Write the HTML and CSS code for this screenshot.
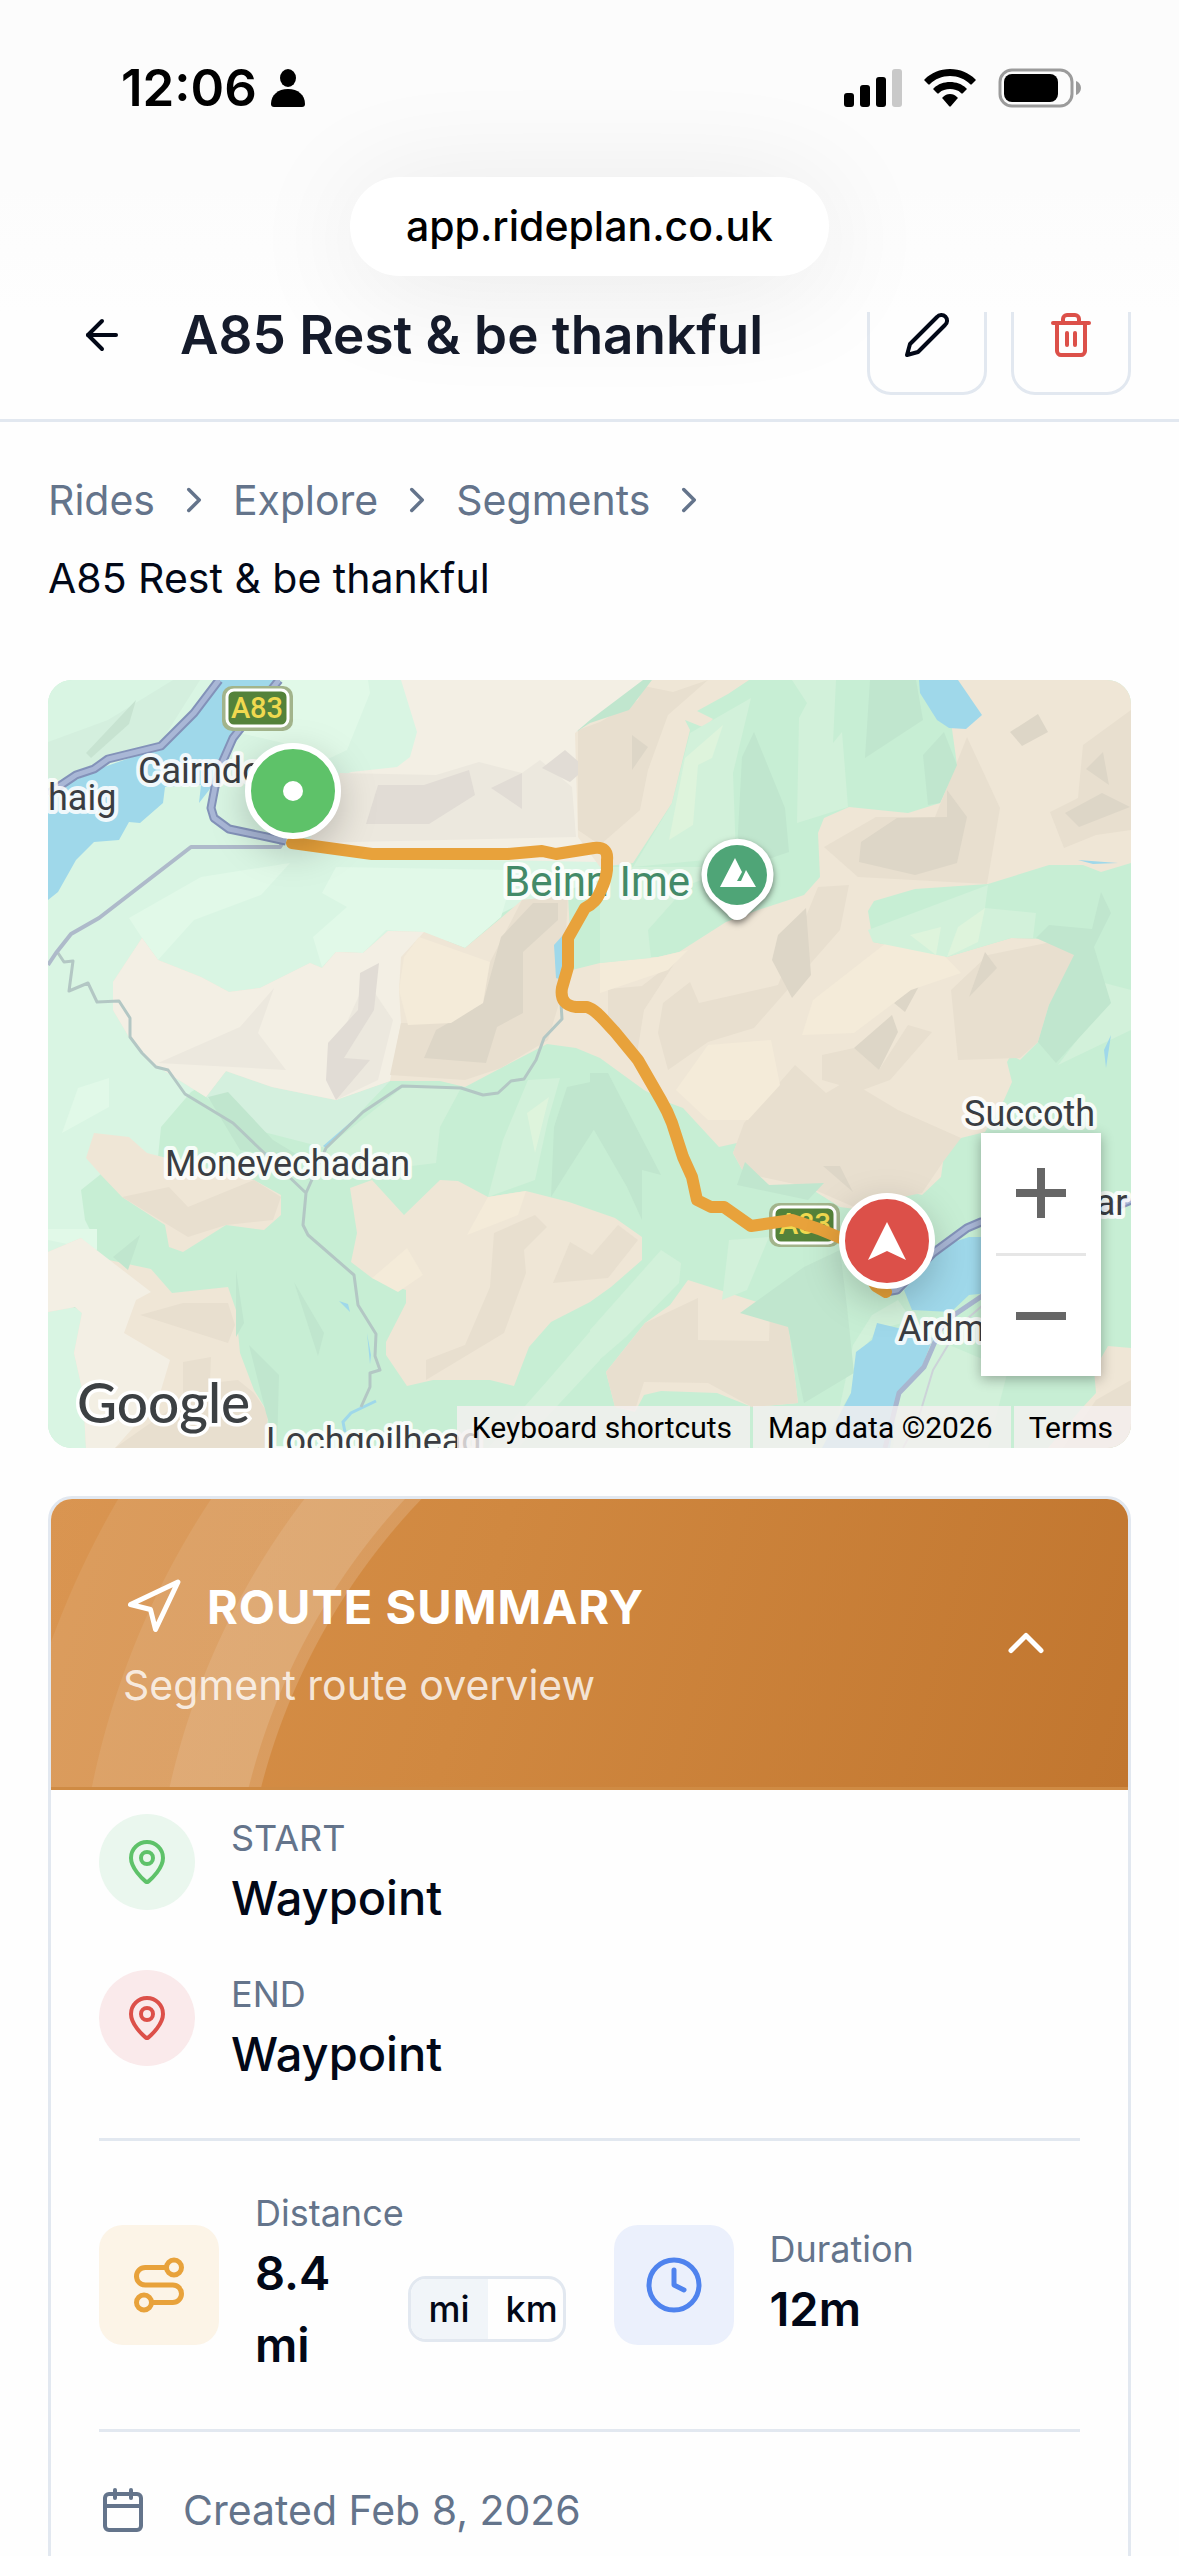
FILE: index.html
```
<!DOCTYPE html>
<html lang="en">
<head>
  <meta charset="UTF-8">
  <meta name="viewport" content="width=device-width, initial-scale=1">
  <title>A85 Rest &amp; be thankful | RidePlan</title>
  <link rel="stylesheet" href="styles.css">
</head>
<body>

<div class="chrome">
  <div class="status">
    <div class="status__time">
      <span>12:06</span>
      <svg width="34" height="38" viewBox="0 0 34 38"><ellipse cx="17" cy="9" rx="8" ry="9"/><path d="M0 35C0 26 7 20 17 20s17 6 17 15c0 2-1 3-3 3H3c-2 0-3-1-3-3z"/></svg>
    </div>
    <div class="status__icons">
      <svg width="58" height="38" viewBox="0 0 58 38"><rect y="24" width="10" height="14" rx="3"/><rect x="16" y="16" width="10" height="22" rx="3"/><rect x="32" y="8" width="10" height="30" rx="3"/><rect x="48" width="10" height="38" rx="3" fill="#c9c9c9"/></svg>
      <svg width="52" height="38" viewBox="0 0 52 38"><path d="M26 0C16 0 7 4 1 10c-1 1-1 1 0 2l3 3c1 1 1 1 2 0 5-5 12-8 20-8s15 3 20 8c1 1 1 1 2 0l3-3c1-1 1-1 0-2C45 4 36 0 26 0z"/><path d="M26 13c-6 0-12 2-16 6-1 1-1 1 0 2l3 3c1 1 1 1 2 0 3-3 7-4 11-4s8 1 11 4c1 1 1 1 2 0l3-3c1-1 1-1 0-2-4-4-10-6-16-6z"/><path d="M26 25c-3 0-5 1-7 3-1 1-1 1 0 2l6 7c1 1 1 1 2 0l6-7c1-1 1-1 0-2-2-2-4-3-7-3z"/></svg>
      <svg width="84" height="40" viewBox="0 0 84 40"><rect x="2" y="2" width="72" height="36" rx="12" fill="none" stroke="#9b9b9b" stroke-width="3"/><rect x="6" y="6" width="54" height="28" rx="8"/><path d="M78 13c3 1 5 4 5 7s-2 6-5 7z" fill="#9b9b9b"/></svg>
    </div>
  </div>
  <a class="url" href="#">app.rideplan.co.uk</a>
</div>

<header class="topbar">
  <div class="topbar__row">
    <button class="back" aria-label="Back">
      <svg class="icon" width="48" height="48" viewBox="0 0 24 24"><path d="m12 19-7-7 7-7"/><path d="M19 12H5"/></svg>
    </button>
    <h1>A85 Rest &amp; be thankful</h1>
    <button class="tool" aria-label="Edit">
      <svg class="icon" width="48" height="48" viewBox="0 0 24 24"><path d="M17 3a2.85 2.83 0 1 1 4 4L7.5 20.5 2 22l1.5-5.5Z"/></svg>
    </button>
    <button class="tool tool--danger" aria-label="Delete">
      <svg class="icon" width="48" height="48" viewBox="0 0 24 24"><path d="M3 6h18"/><path d="M19 6v14c0 1-1 2-2 2H7c-1 0-2-1-2-2V6"/><path d="M8 6V4c0-1 1-2 2-2h4c1 0 2 1 2 2v2"/><path d="M10 11v6"/><path d="M14 11v6"/></svg>
    </button>
  </div>
</header>

<main>
  <nav class="crumbs">
    <a href="#">Rides</a>
    <svg class="icon" width="42" height="42" viewBox="0 0 24 24"><path d="m9 18 6-6-6-6"/></svg>
    <a href="#">Explore</a>
    <svg class="icon" width="42" height="42" viewBox="0 0 24 24"><path d="m9 18 6-6-6-6"/></svg>
    <a href="#">Segments</a>
    <svg class="icon" width="42" height="42" viewBox="0 0 24 24"><path d="m9 18 6-6-6-6"/></svg>
    <span class="crumbs__current">A85 Rest &amp; be thankful</span>
  </nav>

  <section class="map">
    <svg class="map__canvas" viewBox="0 0 1083 768" preserveAspectRatio="xMidYMid slice">
      <rect width="1083" height="768" fill="#c7eed4"/>

      <!-- lowland -->
      <g fill="#d9f5e3">
        <path d="M0 0H600L552 200 470 225 380 270 143 412 113 447 110 477 53 494 33 510 37 540 47 560 49 580 0 575z"/>
        <path d="M0 620 34 630 40 768H0z"/>
      </g>
      <path d="M178 391 288 420 342 401 278 468 192 446 158 417z" fill="#d4f0de"/>
      <g fill="#e1f9e8">
        <path d="M288 187 467 190 453 237 417 268 378 253 338 250 315 273 288 272 274 287 265 257 299 227 274 213z"/>
        <path d="M81 238 153 197 242 183 213 215 146 240 110 280 94 258z"/>
        <path d="M235 0H320L322 13 299 70 263 87 235 63 192 53z"/>
        <path d="M30 408 61 398 61 427 14 453z"/>
        <path d="M0 549H49V570L0 560z"/>
      </g>
      <path d="M0 62 60 40 125 0H152L113 62 10 100 0 110z" fill="#d4efde"/>
      <path d="M38 73 88 20 81 44 43 78z" fill="#c7e3d1"/>

      <!-- upland -->
      <path d="M353 0 369 52 362 77 349 87 303 92 275 105 262 160 330 178 552 182 604 0z" fill="#f3efe4"/>
      <path d="M604 0H701L680 14 649 31 665 39 657 48 637 40 642 50 624 123 585 183 552 187 530 157 527 53z" fill="#efe6d6"/>
      <path d="M910 0H1083V183L1053 192 1035 185 1001 185 940 204 867 209 826 221 820 231 825 262 899 277 963 258 1003 259 1026 275 1022 293 1001 325 990 362 972 380 963 375 959 382 964 402 956 420 937 452 913 458 899 468 883 478 895 482 893 497 874 515 855 510 850 525 814 530 792 527 760 507 721 505 696 493 685 473 689 463 671 467 635 428 619 422 596 410 552 378 528 368 499 364 453 388 417 407 392 401 342 401 288 420 224 407 178 391 158 417 99 380 81 357 65 330 65 302 94 258 110 280 153 297 181 312 212 308 262 283 274 288 288 272 315 273 340 251 376 252 417 268 453 238 474 220 520 215 524 290 552 283 610 277 631 272 678 242 713 229 756 215 772 197 770 153 776 138 801 127 860 133 892 123 909 85 904 49z" fill="#efe6d6"/>
      <path d="M376 252 353 277 351 310 353 343 344 390 342 401 288 420 224 407 178 391 158 417 99 380 81 357 65 330 65 302 94 258 110 280 153 297 181 312 212 308 262 283 274 288 288 272 315 273 340 251z" fill="#f3efe4"/>
      <path d="M46 453 81 457 99 473 206 500 233 515 233 535 216 550 178 545 135 572 121 567 117 545 74 517 53 495 38 478z" fill="#efe6d6"/>
      <path d="M0 572 33 558 47 577 103 589 124 613 180 607 188 630 192 673 206 710 220 733 218 768H38L35 713 26 673 34 633 27 627 0 632z" fill="#efe6d6"/>
      <path d="M0 572 33 558 103 612 88 620 76 653 122 680 110 720 67 768H38L35 713 26 673 34 633 27 627 0 632z" fill="#f3efe4"/>
      <path d="M302 508 324 500 356 535 392 500 410 501 440 517 478 511 521 522 567 538 594 557 594 580 563 607 542 622 503 642 481 667 466 706 442 700 385 700 359 706 338 675 338 662 358 623 358 610 324 598 303 582 309 553z" fill="#efe6d6"/>
      <path d="M640 600 728 628 740 643 750 723 704 727 669 713 613 711 596 715 587 732 567 727 558 692 597 643 622 625z" fill="#efe6d6"/>
      <path d="M1060 666 1083 668V768H1000L1035 727 1048 713 1046 690z" fill="#efe6d6"/>

      <!-- hill shading -->
      <g fill="#ece8de">
        <path d="M292 93 388 95 431 82 474 93 492 80 524 107 528 157 260 163z"/>
        <path d="M226 308 210 353 238 390 110 383 192 347z"/>
        <path d="M300 340 318 300 345 340 330 400 288 420 278 400z"/>
      </g>
      <g fill="#e1dcd5">
        <path d="M330 105 376 105 421 90 427 115 381 144 318 144z"/>
        <path d="M443 108 474 93 474 129z"/>
        <path d="M494 88 517 70 538 88 522 102z"/>
        <path d="M312 293 331 283 326 330 296 378 322 380 288 420 278 400 280 363 310 330z"/>
      </g>
      <g fill="#e8dfcf">
        <path d="M530 50 552 42 590 20 596 6 625 12 660 0 620 35 600 90 592 130 552 165 530 150z"/>
        <path d="M474 220 520 215 515 310 500 360 453 388 417 400 342 395 353 343 403 343 442 282z"/>
        <path d="M919 57 952 128 939 204 810 197 776 167 828 137 887 137z"/>
        <path d="M642 302 651 323 730 305 770 207 801 205 792 250 706 348 660 362 620 390 610 353 615 323z"/>
        <path d="M560 309 594 306 630 278 596 330 588 380 560 345z"/>
        <path d="M1083 30 1035 65 1030 118 1002 132 1016 168 1048 155 1083 150z"/>
        <path d="M903 310 940 275 1003 262 1026 275 1022 293 1001 325 990 362 972 378 910 380z"/>
        <path d="M774 375 806 368 831 390 860 345 884 352 842 400 812 411 774 400z"/>
        <path d="M696 443 747 385 778 413 800 400 850 430 913 458 895 482 874 513 806 527 760 507 696 493 685 473z"/>
        <path d="M121 507 140 527 206 500 233 517 225 540 178 545 140 557 74 517z"/>
        <path d="M487 535 499 547 476 570 478 593 456 653 378 700 378 680 417 665 442 607 446 553z"/>
        <path d="M522 562 544 575 570 545 590 560 560 598 505 603z"/>
        <path d="M92 635 135 623 180 623 187 645 180 663z"/>
        <path d="M135 682 163 677 162 703 190 700 206 713 220 733 217 768H67L135 720z"/>
        <path d="M650 618 650 660 721 661 722 630 740 643 750 723 704 727 660 703 596 702 587 730 567 727 558 692 597 643z"/>
        <path d="M1048 720 1083 700V768H1015z"/>
      </g>
      <g fill="#ddd6c7">
        <path d="M485 223 510 223 510 240 475 272 475 333 449 347 438 383 376 378 388 350 435 323 453 257z"/>
        <path d="M849 138 899 137 899 110 919 137 909 183 867 195 811 182 813 162z"/>
        <path d="M758 228 763 295 744 318 724 280 730 255z"/>
        <path d="M1017 133 1054 113 1082 127 1031 147z"/>
        <path d="M962 52 990 34 1000 52 974 66z"/>
        <path d="M1038 89 1055 72 1061 105z"/>
        <path d="M937 272 949 288 921 317z"/>
        <path d="M846 323 876 297 857 332z"/>
        <path d="M806 368 844 335 850 352 831 390z"/>
        <path d="M584 55 600 67 584 90z"/>
        <path d="M775 486 792 486 805 512z"/>
      </g>
      <g fill="#f4ebd9">
        <path d="M371 257 442 282 435 323 403 343 360 345 351 310 356 277z"/>
        <path d="M894 273 913 293 863 310 806 353 754 355 765 320 838 263z"/>
        <path d="M552 283 610 277 640 270 620 290 552 313z"/>
        <path d="M660 365 723 360 732 405 700 440 660 440 628 410z"/>
        <path d="M440 517 478 511 470 535 419 555z"/>
        <path d="M359 568 375 595 350 612 324 598z"/>
      </g>
      <g fill="#d2f1da">
        <path d="M642 53 703 18 685 93 688 177 585 187 624 123z"/>
        <path d="M552 187 688 187 640 205 600 250 603 278 552 283z"/>
        <path d="M744 0H788L785 63 794 52 800 127 749 143 751 38 759 23z"/>
        <path d="M825 262 820 250 940 205 937 228 988 233 985 258 963 258 899 277z"/>
        <path d="M1045 300 1048 335 1010 385 1083 350V310z"/>
        <path d="M354 408 413 408 392 447 388 483 290 495 278 468z"/>
        <path d="M480 400 512 398 500 440 487 500 440 517 455 460z"/>
        <path d="M681 560 721 557 699 610 674 620z"/>
        <path d="M542 650 613 570 633 583 631 603 578 657 542 688z"/>
        <path d="M885 658 960 690 940 768H845L851 713z"/>
        <path d="M824 635 850 620 864 640 829 650 808 680 803 713 790 735 805 665z"/>
        <path d="M470 768 552 680 552 640 500 700 440 768z"/>
      </g>
      <g fill="#def4dc">
        <path d="M637 78 675 45 664 78 650 85 645 145 621 160z"/>
        <path d="M862 255 893 247 888 275z"/>
        <path d="M910 247 937 228 930 262 899 277z"/>
        <path d="M479 433 501 417 487 473z"/>
      </g>
      <g fill="#c0e6ce">
        <path d="M706 52 737 128 741 172 688 190 694 77z"/>
        <path d="M822 0H868L875 40 817 78z"/>
        <path d="M875 75 896 52 909 85 892 123 880 125z"/>
        <path d="M528 52 542 43 581 30 604 0H595L542 40z"/>
        <path d="M988 258 1001 245 1044 249 1053 212 1063 233 1046 267 1063 323 1008 383 990 362 1001 325 1026 275z"/>
        <path d="M519 407 552 400 552 440 520 490 503 517 506 447z"/>
        <path d="M542 393 560 393 613 495 594 490 594 540 579 507 542 443z"/>
        <path d="M792 570 799 627 806 693 756 723 740 647 692 633 756 587z"/>
        <path d="M697 482 721 505 776 503 760 520 689 505z"/>
        <path d="M188 590 196 643 188 657z"/>
        <path d="M246 602 276 653 270 676z"/>
        <path d="M201 665 231 695 229 768 218 733z"/>
        <path d="M65 577 92 555 80 590z"/>
        <path d="M160 417 180 412 225 460 258 480 192 470z"/>
      </g>

      <!-- water -->
      <g fill="#9fd8ea">
        <path d="M172 0H228L196 50 174 83 165 105 151 123 153 105 117 107 115 123 92 143 81 142 71 160 46 162 28 180 10 212 0 220V117L13 107 56 87 113 67 146 33z"/>
        <path d="M871 0H910L934 35 918 49 901 48 889 40 872 13z"/>
        <path d="M933 557 921 557 903 563 885 577 856 610 864 630 903 632 921 615 950 612V557z"/>
        <path d="M829 643 850 648 885 658 874 687 851 713 842 768H774L803 713 808 672 824 660z"/>
        <path d="M506 265 515 255 514 300 508 298z"/>
        <path d="M1030 180 1070 183 1045 184z"/>
        <path d="M1056 370 1063 355 1058 388z"/>
        <path d="M275 466 312 434 278 468z"/>
        <path d="M291 621 300 624 302 632z"/>
        <path d="M319 653 323 675 322 684z"/>
      </g>
      <path d="M328 721 303 733 295 742 297 752" fill="none" stroke="#9fd8ea" stroke-width="3"/>

      <!-- roads -->
      <g fill="none" stroke-linejoin="round">
        <path d="M10 273 16 282 25 281 21 311 40 303 49 322 71 321 82 338 82 357 94 373 108 387 120 390 137 414 185 443 212 469 258 513 255 545 260 555 306 595 310 625 328 654 327 676 332 690 322 693 322 707 313 727M258 513 278 468 315 432 354 406 413 408 435 415 450 413 463 401 476 399 488 380 496 358 514 339 513 323" stroke="#b3c7c4" stroke-width="3"/>
        <path d="M235 162 232 167 143 167 51 238 23 254 8 273 0 285" stroke="#aebaca" stroke-width="4"/>
        <path d="M940 612 906 635 892 650 876 687 851 713 837 768" stroke="#a8b6cf" stroke-width="5"/>
        <path d="M935 625 912 645 885 690 870 740 855 768" stroke="#ccd3d8" stroke-width="2"/>
        <g stroke="#8392b9" stroke-width="9">
          <path d="M0 114 13 105 28 95 46 89 60 79 113 66 146 33 171 0M231 0 185 58 174 83 167 107 163 128 166 138 181 149 238 161"/>
          <path d="M1083 520 1071 525 933 542 919 548 885 573 849 610 838 612"/>
        </g>
        <g stroke="#a9b7d6" stroke-width="5">
          <path d="M0 114 13 105 28 95 46 89 60 79 113 66 146 33 171 0M231 0 185 58 174 83 167 107 163 128 166 138 181 149 238 161"/>
          <path d="M1083 520 1071 525 933 542 919 548 885 573 849 610 838 612"/>
        </g>
      </g>

      <!-- road shields -->
      <g class="shield">
        <rect x="174" y="6" width="71" height="45" rx="10" fill="#a2b48b"/>
        <rect x="179" y="10" width="61" height="36" rx="7" fill="#54823a" stroke="#fff" stroke-width="3"/>
        <text x="209" y="38">A83</text>
        <rect x="721" y="523" width="71" height="44" rx="10" fill="#a2b48b"/>
        <rect x="726" y="527" width="61" height="36" rx="7" fill="#54823a" stroke="#fff" stroke-width="3"/>
        <text x="757" y="554">A83</text>
      </g>

      <!-- places -->
      <g class="place">
        <text x="90" y="103">Cairndow</text>
        <text x="0" y="130">haig</text>
        <text x="117" y="496">Monevechadan</text>
        <text x="916" y="446">Succoth</text>
        <text x="850" y="661">Ardmay</text>
        <text x="1036" y="535">tar</text>
        <text x="218" y="773">Lochgoilhead</text>
        <text class="place--peak" x="456" y="216">Beinn Ime</text>
      </g>
      <g class="pin">
        <path d="M689 240C685 240 682 238 679 234L662 218A36 36 0 1 1 717 218L700 234C697 238 693 240 689 240z" fill="#fff"/>
        <circle cx="689" cy="195" r="30" fill="#4fa577"/>
        <path d="M687 178 694 192 689 201H693L698 190 708 207H672z" fill="#fff"/>
      </g>

      <path d="M244 163 324 174H460L494 171 508 174 546 168C556 167 560 171 559 180V190Q558 200 553 210C549 220 545 224 537 228L520 258V287L514 308C512 320 518 326 528 327H539C549 330 557 342 567 352L590 380 613 420Q620 432 624 443L635 477 644 497 649 520 663 527H676L703 546 744 540 771 549 800 561 828 606 838 612" fill="none" stroke="#e8a23b" stroke-width="12" stroke-linejoin="round" stroke-linecap="round"/>

      <g class="marker">
        <circle cx="245" cy="111" r="45" fill="#5ec269"/>
        <circle cx="245" cy="111" r="10" fill="#fff" stroke="none"/>
      </g>
      <g class="marker">
        <circle cx="839" cy="561" r="45" fill="#dc5049"/>
        <path d="M839 542 858 580 839 571 820 580z" fill="#fff" stroke="none"/>
      </g>
      <text class="google" x="29" y="743">Google</text>
    </svg>

    <div class="zoom">
      <button aria-label="Zoom in"><svg width="50" height="50" viewBox="0 0 50 50"><path d="M25 0V50M0 25H50"/></svg></button>
      <button aria-label="Zoom out"><svg width="50" height="50" viewBox="0 0 50 50"><path d="M0 25H50"/></svg></button>
    </div>
    <div class="credits">
      <button>Keyboard shortcuts</button>
      <span>Map data ©2026</span>
      <a href="#">Terms</a>
    </div>
  </section>

  <section class="card">
    <div class="card__head">
      <div>
        <h2>
          <svg class="icon" width="60" height="60" viewBox="0 0 24 24"><path d="M3 11 22 2 13 21 11 13z"/></svg>
          ROUTE SUMMARY
        </h2>
        <p>Segment route overview</p>
      </div>
      <button aria-label="Collapse">
        <svg class="icon" width="60" height="60" viewBox="0 0 24 24"><path d="m18 15-6-6-6 6"/></svg>
      </button>
    </div>

    <div class="card__body">
      <div class="stop">
        <span class="stop__icon stop__icon--start"><svg class="icon" width="48" height="48" viewBox="0 0 24 24"><path d="M20 10c0 5-5.5 10.2-7.4 11.8a1 1 0 0 1-1.2 0C9.5 20.2 4 15 4 10a8 8 0 0 1 16 0"/><circle cx="12" cy="10" r="3"/></svg></span>
        <div>
          <div class="label">START</div>
          <div class="stop__name">Waypoint</div>
        </div>
      </div>
      <div class="stop">
        <span class="stop__icon stop__icon--end"><svg class="icon" width="48" height="48" viewBox="0 0 24 24"><path d="M20 10c0 5-5.5 10.2-7.4 11.8a1 1 0 0 1-1.2 0C9.5 20.2 4 15 4 10a8 8 0 0 1 16 0"/><circle cx="12" cy="10" r="3"/></svg></span>
        <div>
          <div class="label">END</div>
          <div class="stop__name">Waypoint</div>
        </div>
      </div>

      <div class="stats">
        <div class="stat">
          <span class="stat__icon stat__icon--distance"><svg class="icon" width="60" height="60" viewBox="0 0 24 24"><circle cx="6" cy="19" r="3"/><path d="M9 19h8.5a3.5 3.5 0 0 0 0-7h-11a3.5 3.5 0 0 1 0-7H15"/><circle cx="18" cy="5" r="3"/></svg></span>
          <div class="stat__text">
            <div class="label">Distance</div>
            <div class="stat__row">
              <div class="stat__value">8.4<br>mi</div>
              <div class="units">
                <button class="units__on">mi</button>
                <button>km</button>
              </div>
            </div>
          </div>
        </div>
        <div class="stat">
          <span class="stat__icon stat__icon--duration"><svg class="icon" width="60" height="60" viewBox="0 0 24 24"><circle cx="12" cy="12" r="10"/><path d="M12 6v6l4 2"/></svg></span>
          <div class="stat__text">
            <div class="label">Duration</div>
            <div class="stat__value">12m</div>
          </div>
        </div>
      </div>

      <div class="created">
        <svg class="icon" width="48" height="48" viewBox="0 0 24 24"><path d="M8 2v4"/><path d="M16 2v4"/><rect width="18" height="18" x="3" y="4" rx="2"/><path d="M3 10h18"/></svg>
        <span>Created Feb 8, 2026</span>
      </div>
    </div>
  </section>
</main>
</body>
</html>
```
FILE: styles.css
```
* {
  box-sizing: border-box;
}
body {
  margin: 0;
  height: 100vh;
  overflow: hidden;
  background: #fefefe;
  color: #020817;
  font-family: Inter, "Liberation Sans", sans-serif;
  font-size: 41px;
  line-height: 60px;
}
button {
  margin: 0;
  padding: 0;
  border: 0;
  background: none;
  color: inherit;
  font: inherit;
}
a {
  color: inherit;
  text-decoration: none;
}
h1, h2, p {
  margin: 0;
}
svg {
  display: block;
  flex: none;
}
.icon {
  fill: none;
  stroke: currentColor;
  stroke-width: 2;
  stroke-linecap: round;
  stroke-linejoin: round;
}

/* browser chrome */
.chrome {
  position: relative;
  z-index: 1;
  height: 312px;
  padding-top: 57px;
  background: linear-gradient(#fcfcfc 60%, #fefefe);
}
.status {
  display: flex;
  justify-content: space-between;
  height: 62px;
  padding: 0 97px 0 121px;
  color: #000;
}
.status__time,
.status__icons {
  display: flex;
  align-items: center;
}
.status__time {
  gap: 14px;
  font-size: 51px;
  font-weight: 600;
}
.status__icons {
  gap: 22px;
}
.url {
  display: block;
  width: fit-content;
  margin: 58px auto 0;
  padding: 0 56px;
  border-radius: 50px;
  background: #fff;
  box-shadow: 0 12px 120px rgba(0, 0, 0, 0.09);
  color: #000;
  font-weight: 500;
  line-height: 99px;
}

/* page header, scrolled under the chrome */
.topbar {
  display: flex;
  align-items: flex-end;
  height: 110px;
  padding: 0 48px 24px;
  border-bottom: 3px solid #e2e8f0;
  overflow: hidden;
}
.topbar__row {
  display: flex;
  flex: 1;
  align-items: center;
  gap: 24px;
  height: 120px;
}
.topbar h1 {
  flex: 1;
  color: #151b2b;
  font-size: 53px;
  font-weight: 600;
}
.back {
  display: flex;
  padding: 30px;
}
.tool {
  display: flex;
  align-items: center;
  justify-content: center;
  width: 120px;
  height: 120px;
  border: 3px solid #e2e8f0;
  border-radius: 24px;
}
.tool--danger {
  color: #dc5049;
}

main {
  padding: 48px;
}
.crumbs {
  display: flex;
  flex-wrap: wrap;
  align-items: center;
  gap: 18px;
  color: #64748b;
}
.crumbs__current {
  flex-basis: 100%;
  color: #020817;
}

/* map */
.map {
  position: relative;
  height: 768px;
  margin: 72px 0 48px;
  border-radius: 24px;
  overflow: hidden;
  font-family: Roboto, sans-serif;
}
.map__canvas {
  width: 100%;
  height: 100%;
}
.shield text {
  fill: #f0d94f;
  font-size: 29px;
  font-weight: 500;
  text-anchor: middle;
}
.place text {
  fill: #3a3d42;
  stroke: #fff;
  stroke-opacity: 0.85;
  stroke-width: 8;
  stroke-linejoin: round;
  paint-order: stroke;
  font-size: 36px;
}
.place .place--peak {
  fill: #438a68;
  font-size: 42px;
}
.pin {
  filter: drop-shadow(0 3px 3px rgba(0, 0, 0, 0.5));
}
.marker {
  stroke: #fff;
  stroke-width: 6;
  filter: drop-shadow(0 12px 18px rgba(0, 0, 0, 0.2));
}
.google {
  fill: #3c4043;
  stroke: #fff;
  stroke-width: 7;
  paint-order: stroke;
  font-family: Lato, sans-serif;
  font-size: 55px;
  font-weight: 500;
}
.zoom {
  position: absolute;
  right: 30px;
  bottom: 72px;
  width: 120px;
  background: #fff;
  box-shadow: 0 3px 12px rgba(0, 0, 0, 0.3);
}
.zoom button {
  display: flex;
  align-items: center;
  justify-content: center;
  width: 90px;
  height: 120px;
  margin: 0 auto;
}
.zoom button + button {
  height: 123px;
  border-top: 3px solid #e6e6e6;
}
.zoom path {
  stroke: #666;
  stroke-width: 8;
}
.credits {
  position: absolute;
  right: 0;
  bottom: 0;
  display: flex;
  gap: 3px;
  color: #000;
  font-size: 30px;
  line-height: 40px;
}
.credits > * {
  padding: 2px 18px 0 15px;
  background: rgba(245, 240, 240, 0.8);
}

/* route summary */
.card {
  border: 3px solid #e2e8f0;
  border-radius: 24px;
  overflow: hidden;
}
.card__head {
  display: flex;
  align-items: center;
  justify-content: space-between;
  height: 291px;
  padding: 0 72px;
  border-bottom: 3px solid #cf8b44;
  background:
    radial-gradient(circle at 842px 451px, transparent 652px, rgba(255, 255, 255, 0.15) 653px, rgba(255, 255, 255, 0.15) 664px, rgba(255, 255, 255, 0.26) 665px, rgba(255, 255, 255, 0.26) 741px, rgba(255, 255, 255, 0.18) 742px, rgba(255, 255, 255, 0.18) 817px, rgba(255, 255, 255, 0.11) 818px, rgba(255, 255, 255, 0.11) 896px, rgba(255, 255, 255, 0.04) 897px),
    linear-gradient(105deg, #d8914a, #d08840 40%, #c1762f);
  color: #fff;
}
.card__head h2 {
  display: flex;
  align-items: center;
  gap: 24px;
  font-size: 47px;
  font-weight: 700;
  letter-spacing: 1px;
  line-height: 72px;
}
.card__head p {
  margin-top: 12px;
  color: rgba(255, 255, 255, 0.8);
}
.card__body {
  padding: 24px 48px 48px;
}
.label {
  color: #64748b;
  font-size: 36px;
  line-height: 48px;
}
.stop {
  display: flex;
  gap: 36px;
}
.stop + .stop {
  margin-top: 36px;
}
.stop__icon {
  display: flex;
  align-items: center;
  justify-content: center;
  width: 96px;
  height: 96px;
  border-radius: 50%;
}
.stop__icon--start {
  background: #eaf7ee;
  color: #5ec269;
}
.stop__icon--end {
  background: #faeaeb;
  color: #dc5049;
}
.stop__name {
  font-size: 47px;
  font-weight: 500;
  line-height: 72px;
}
.stats {
  display: grid;
  grid-template-columns: 1fr 1fr;
  gap: 48px;
  margin: 48px 0;
  padding: 48px 0;
  border: solid #e2e8f0;
  border-width: 3px 0;
}
.stat {
  display: flex;
  align-items: center;
  gap: 36px;
  min-width: 0;
}
.stat__icon {
  display: flex;
  flex: none;
  align-items: center;
  justify-content: center;
  width: 120px;
  height: 120px;
  border-radius: 24px;
}
.stat__icon--distance {
  background: #fcf4e7;
  color: #e8a23b;
}
.stat__icon--duration {
  background: #ebf0fc;
  color: #4f83ee;
}
.stat__text {
  flex: 1;
}
.stat__row {
  display: flex;
  align-items: center;
  justify-content: space-between;
}
.stat__value {
  font-size: 47px;
  font-weight: 600;
  line-height: 72px;
}
.units {
  display: flex;
  width: 158px;
  height: 66px;
  border: 3px solid #e2e8f0;
  border-radius: 18px;
  overflow: hidden;
  font-size: 36px;
}
.units button {
  flex: none;
  padding: 0 18px;
  font-weight: 500;
}
.units .units__on {
  background: #f1f5f9;
}
.created {
  display: flex;
  align-items: center;
  gap: 36px;
  color: #64748b;
}
```
